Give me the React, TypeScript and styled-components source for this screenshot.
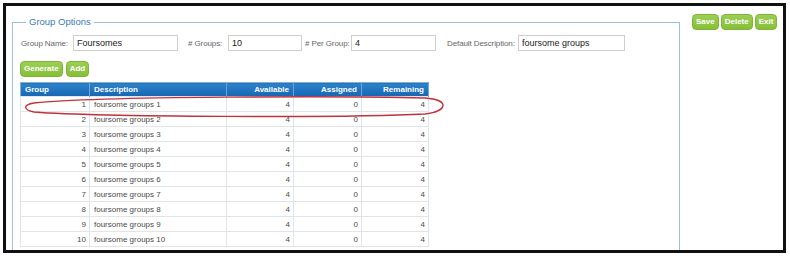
import React from "react";
import styled, { createGlobalStyle } from "styled-components";

const Global = createGlobalStyle`
  html, body { margin: 0; padding: 0; background: #fff; }
  body { font-family: "Liberation Sans", Arial, sans-serif; }
`;

const Frame = styled.div`
  position: relative;
  box-sizing: border-box;
  margin: 3px 0 0 3px;
  width: 783px;
  height: 250px;
  border: 3px solid #111;
  overflow: hidden;
  display: flex;
  align-items: flex-start;
  background: #fff;
`;

const Fieldset = styled.fieldset`
  box-sizing: border-box;
  margin: 10px 0 0 6px;
  padding: 7px 7px 0 7px;
  width: 668px;
  height: 300px;
  border: 1px solid #9fc0d6;
  min-width: 0;
`;

const Legend = styled.legend`
  margin-left: 6px;
  padding: 0 3px;
  font-size: 9.5px;
  line-height: 12px;
  color: #3d7ab8;
`;

const FieldRow = styled.div`
  display: flex;
  align-items: center;
  height: 16px;
  padding-left: 1px;
`;

const Field = styled.label<{ $ml: number }>`
  display: flex;
  align-items: center;
  margin-left: ${(p) => p.$ml}px;
  font-size: 8px;
  color: #666;
`;

const LabelText = styled.span<{ $w: number }>`
  width: ${(p) => p.$w}px;
  white-space: nowrap;
  letter-spacing: -0.1px;
`;

const Input = styled.div<{ $w: number }>`
  box-sizing: border-box;
  width: ${(p) => p.$w}px;
  height: 16px;
  border: 1px solid #cfcfcf;
  padding: 0 3px;
  font-size: 9px;
  line-height: 14px;
  color: #222;
`;

const ButtonRow = styled.div`
  display: flex;
  gap: 3px;
  margin-top: 10px;
`;

const GreenButton = styled.button`
  box-sizing: border-box;
  height: 16px;
  padding: 0 3px;
  border: 1px solid #7fb532;
  border-radius: 4px;
  background: linear-gradient(#9ccf55, #86bf38);
  color: #fff;
  font-family: "Liberation Sans", Arial, sans-serif;
  font-weight: bold;
  font-size: 8px;
  line-height: 14px;
  cursor: pointer;
`;

const TopButtons = styled.div`
  display: flex;
  gap: 2px;
  margin: 8px 0 0 12px;
`;

const TableWrap = styled.div`
  position: relative;
  margin-top: 5px;
`;

const Table = styled.table`
  border-collapse: collapse;
  width: 408px;
  table-layout: fixed;
  border: 1px solid #8cb0cf;
  font-size: 8px;
`;

const Th = styled.th<{ $w: number; $align?: string }>`
  width: ${(p) => p.$w}px;
  height: 14px;
  padding: 0 4px;
  box-sizing: border-box;
  background: linear-gradient(#2c82cc, #1766b2);
  color: #fff;
  font-weight: bold;
  text-align: ${(p) => p.$align || "left"};
  border-right: 1px solid #6ea4d6;
`;

const Td = styled.td<{ $align?: string }>`
  height: 15px;
  padding: 0 3px 0 4px;
  box-sizing: border-box;
  color: #4a4a4a;
  text-align: ${(p) => p.$align || "right"};
  border: 1px solid #e1e5e8;
  white-space: nowrap;
`;

const Ring = styled.svg`
  position: absolute;
  left: 0px;
  top: 13px;
  pointer-events: none;
`;

const rows = Array.from({ length: 10 }, (_, i) => i + 1);

export default function App() {
  return (
    <>
      <Global />
      <Frame>
        <Fieldset>
          <Legend>Group Options</Legend>
          <FieldRow>
            <Field $ml={0}>
              <LabelText $w={52}>Group Name:</LabelText>
              <Input $w={105}>Foursomes</Input>
            </Field>
            <Field $ml={10}>
              <LabelText $w={40}># Groups:</LabelText>
              <Input $w={74}>10</Input>
            </Field>
            <Field $ml={3}>
              <LabelText $w={46}># Per Group:</LabelText>
              <Input $w={85}>4</Input>
            </Field>
            <Field $ml={11}>
              <LabelText $w={71}>Default Description:</LabelText>
              <Input $w={107}>foursome groups</Input>
            </Field>
          </FieldRow>
          <ButtonRow>
            <GreenButton>Generate</GreenButton>
            <GreenButton>Add</GreenButton>
          </ButtonRow>
          <TableWrap>
            <Table>
              <thead>
                <tr>
                  <Th $w={69}>Group</Th>
                  <Th $w={137}>Description</Th>
                  <Th $w={67} $align="right">Available</Th>
                  <Th $w={68} $align="right">Assigned</Th>
                  <Th $w={67} $align="right">Remaining</Th>
                </tr>
              </thead>
              <tbody>
                {rows.map((n) => (
                  <tr key={n}>
                    <Td>{n}</Td>
                    <Td $align="left">foursome groups {n}</Td>
                    <Td>4</Td>
                    <Td>0</Td>
                    <Td>4</Td>
                  </tr>
                ))}
              </tbody>
            </Table>
            <Ring width="430" height="24" viewBox="0 0 430 24">
              <path
                d="M14 8 C 80 1, 330 1, 405 3 C 430 5, 428 16, 405 19 C 330 23, 80 22, 14 17 C 4 15, 2 10, 14 8"
                fill="none"
                stroke="#c0333a"
                strokeWidth="1.4"
              />
            </Ring>
          </TableWrap>
        </Fieldset>
        <TopButtons>
          <GreenButton>Save</GreenButton>
          <GreenButton>Delete</GreenButton>
          <GreenButton>Exit</GreenButton>
        </TopButtons>
      </Frame>
    </>
  );
}
